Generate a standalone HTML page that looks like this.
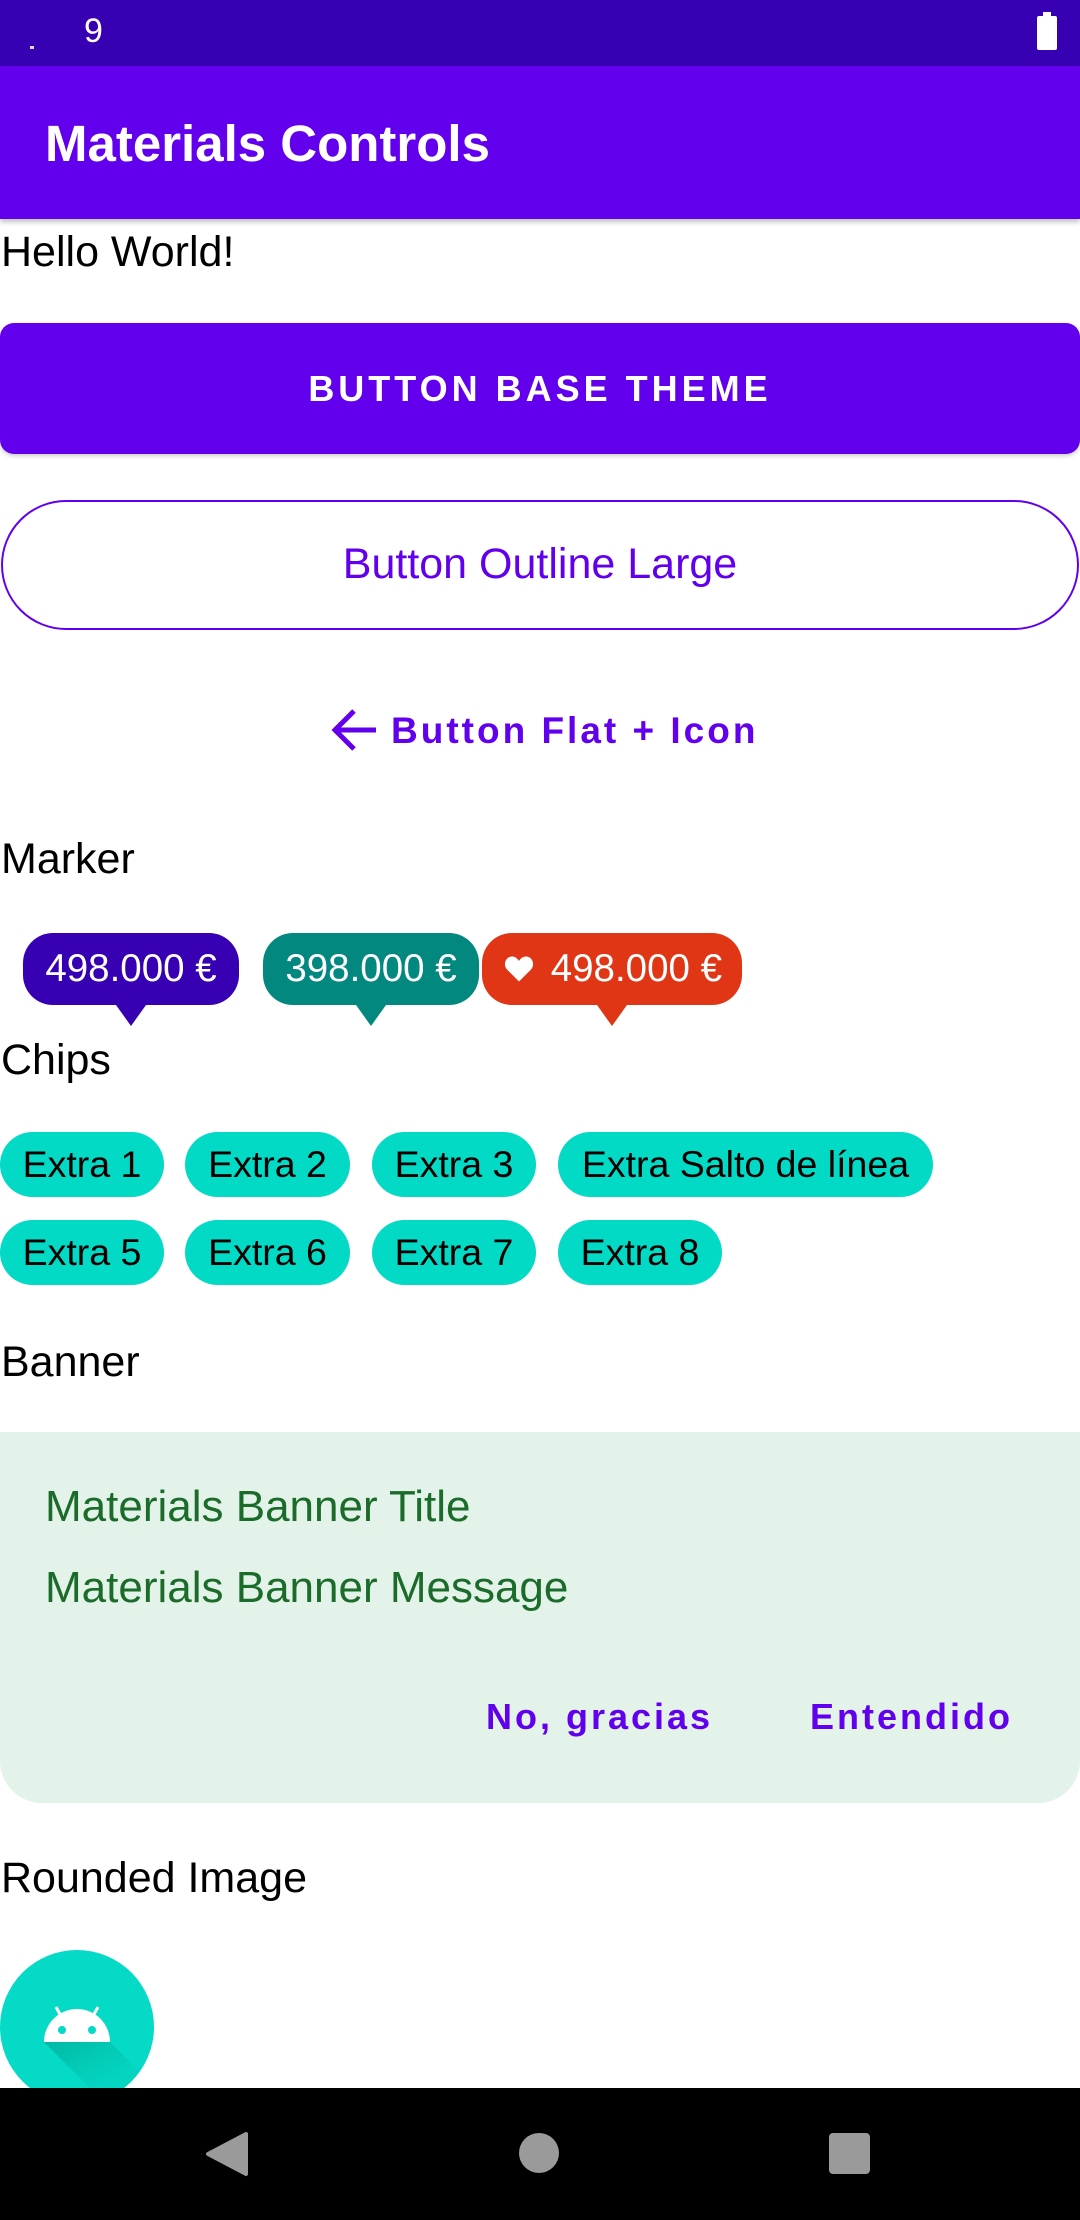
<!DOCTYPE html>
<html><head><meta charset="utf-8"><style>
*{margin:0;padding:0;box-sizing:border-box}
body{width:1080px;height:2220px;background:#fff;font-family:"Liberation Sans",sans-serif;position:relative;overflow:hidden;color:#000}
.a{position:absolute;white-space:nowrap}
.lbl{position:absolute;left:1px;font-size:43px;line-height:50px}
.chip{position:absolute;height:65px;border-radius:33px;background:#03dac5;font-size:37.5px;line-height:65px;text-align:center}
.mk{position:absolute;top:933px;height:72px;border-radius:30px;color:#fff;font-size:38.5px;line-height:72px;text-align:center}
.mk i{position:absolute;left:50%;bottom:-21px;margin-left:-15px;width:0;height:0;border-left:15px solid transparent;border-right:15px solid transparent;border-top:21px solid}
.pb{color:#6200ee;font-weight:bold;letter-spacing:3px}
</style></head><body>
<div class="a" style="left:0;top:0;width:1080px;height:66px;background:#3700b3"></div>
<div class="a" style="left:84px;top:12px;color:#fff;font-size:34px">9</div>
<div class="a" style="left:30px;top:46px;width:4px;height:3px;background:#ddd"></div>
<div class="a" style="left:1037px;top:16px;width:20px;height:34px;background:#fff;border-radius:2px"></div>
<div class="a" style="left:1043px;top:12px;width:8px;height:5px;background:#fff"></div>
<div class="a" style="left:0;top:66px;width:1080px;height:153px;background:#6200ee;box-shadow:0 3px 5px rgba(0,0,0,.25)"></div>
<div class="a" style="left:45px;top:114px;color:#fff;font-size:51px;font-weight:bold;line-height:60px">Materials Controls</div>
<div class="lbl" style="top:227px">Hello World!</div>
<div class="a" style="left:0;top:323px;width:1080px;height:131px;background:#6200ee;border-radius:14px;box-shadow:0 2px 4px rgba(0,0,0,.2);color:#fff;font-size:36px;font-weight:bold;letter-spacing:4px;text-align:center;line-height:131px">BUTTON BASE THEME</div>
<div class="a" style="left:1px;top:500px;width:1078px;height:130px;border:2.5px solid #6200ee;border-radius:65px;color:#6200ee;font-size:43px;text-align:center;line-height:125px">Button Outline Large</div>
<svg class="a" style="left:330px;top:706px" width="48" height="48" viewBox="0 0 48 48"><path d="M46 24H6M24 5L5 24l19 19" fill="none" stroke="#6200ee" stroke-width="5"/></svg>
<div class="a pb" style="left:391px;top:707px;font-size:37px;line-height:48px;letter-spacing:3px">Button Flat + Icon</div>
<div class="lbl" style="top:834px">Marker</div>
<div class="mk" style="left:23px;width:216px;background:#3700b3;color:#fff">498.000 €<i style="border-top-color:#3700b3"></i></div>
<div class="mk" style="left:263px;width:216px;background:#02887f">398.000 €<i style="border-top-color:#02887f"></i></div>
<div class="mk" style="left:482px;width:260px;background:#e03616;text-align:right;padding-right:20px">498.000 €<i style="border-top-color:#e03616"></i>
<svg class="a" style="left:22px;top:22px" width="30" height="28" viewBox="0 0 24 22"><path d="M12 21L2.5 11.5C-1 8 1 1 6.5 1c2.5 0 4 1.5 5.5 3.5C13.5 2.5 15 1 17.5 1 23 1 25 8 21.5 11.5z" fill="#fff"/></svg></div>
<div class="lbl" style="top:1035px">Chips</div>
<div class="chip" style="left:0;top:1132px;width:164px">Extra 1</div>
<div class="chip" style="left:185px;top:1132px;width:165px">Extra 2</div>
<div class="chip" style="left:372px;top:1132px;width:164px">Extra 3</div>
<div class="chip" style="left:558px;top:1132px;width:375px">Extra Salto de línea</div>
<div class="chip" style="left:0;top:1220px;width:164px">Extra 5</div>
<div class="chip" style="left:185px;top:1220px;width:165px">Extra 6</div>
<div class="chip" style="left:372px;top:1220px;width:164px">Extra 7</div>
<div class="chip" style="left:558px;top:1220px;width:164px">Extra 8</div>
<div class="lbl" style="top:1337px">Banner</div>
<div class="a" style="left:0;top:1432px;width:1080px;height:371px;background:#e3f3ea;border-radius:0 0 42px 42px"></div>
<div class="a" style="left:45px;top:1482px;color:#1b6b2a;font-size:44px;line-height:50px">Materials Banner Title</div>
<div class="a" style="left:45px;top:1563px;color:#1b6b2a;font-size:44px;line-height:50px">Materials Banner Message</div>
<div class="a pb" style="left:486px;top:1695px;font-size:36px;line-height:44px">No, gracias</div>
<div class="a pb" style="left:810px;top:1695px;font-size:36px;line-height:44px">Entendido</div>
<div class="lbl" style="top:1853px">Rounded Image</div>
<svg class="a" style="left:0;top:1950px" width="154" height="154" viewBox="0 0 154 154">
<defs><linearGradient id="g" x1="0" y1="0" x2="1" y2="1"><stop offset="0" stop-color="#009e8a" stop-opacity=".6"/><stop offset="1" stop-color="#03dac5" stop-opacity="0"/></linearGradient><clipPath id="c"><circle cx="77" cy="77" r="77"/></clipPath></defs>
<circle cx="77" cy="77" r="77" fill="#04dac6"/>
<path d="M44 92H110L170 152H104Z" fill="url(#g)" clip-path="url(#c)"/>
<path d="M44 92A33 33 0 0 1 110 92Z" fill="#fff"/>
<path d="M62 68L56 57M92 68L98 57" stroke="#fff" stroke-width="3"/>
<circle cx="62" cy="80" r="4" fill="#04dac6"/><circle cx="92" cy="80" r="4" fill="#04dac6"/>
</svg>
<div class="a" style="left:0;top:2088px;width:1080px;height:132px;background:#000"></div>
<svg class="a" style="left:204px;top:2130px" width="46" height="48" viewBox="0 0 46 48"><path d="M42 4L4 24l38 20z" fill="#9a9a9a" stroke="#9a9a9a" stroke-width="4" stroke-linejoin="round"/></svg>
<div class="a" style="left:519px;top:2133px;width:40px;height:40px;border-radius:50%;background:#9a9a9a"></div>
<div class="a" style="left:829px;top:2133px;width:41px;height:41px;border-radius:4px;background:#9a9a9a"></div>
</body></html>
